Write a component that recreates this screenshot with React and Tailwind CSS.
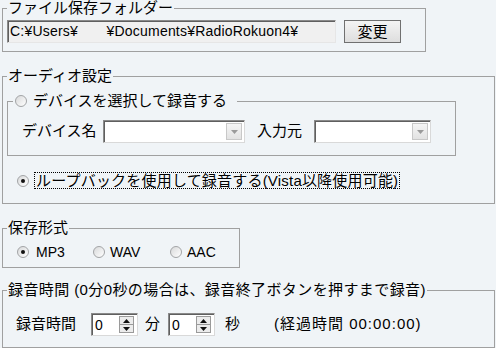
import React from 'react';

const font = { fontFamily: '"Liberation Sans", "Noto Sans CJK JP", sans-serif' };

function Radio({ checked }) {
  return (
    <span className="w-[12px] h-[12px] rounded-full border border-[#a2a4a6] bg-gradient-to-br from-[#d8d9da] to-white flex items-center justify-center shrink-0">
      {checked && <span className="w-[4px] h-[4px] rounded-full bg-[#111]" />}
    </span>
  );
}

function Combo({ w }) {
  return (
    <div className={`${w} h-[23px] bg-white border border-[#8a8a8a] border-b-[#d9d9d9] border-r-[#d9d9d9] shadow-[inset_1px_1px_0_#5f5f5f] flex justify-end p-[2px]`}>
      <div className="w-[16px] h-full bg-gradient-to-b from-[#f5f5f5] to-[#e2e2e2] border border-[#c8c8c8] flex items-center justify-center">
        <svg width="7" height="4" viewBox="0 0 7 4">
          <path d="M0 0h7L3.5 4z" fill="#9a9a9a" />
        </svg>
      </div>
    </div>
  );
}

function Spin({ w }) {
  return (
    <div className={`${w} h-[23px] bg-white border border-[#8a8a8a] border-b-[#d9d9d9] border-r-[#d9d9d9] shadow-[inset_1px_1px_0_#5f5f5f] flex items-center pl-[3px] pr-[3px]`}>
      <span className="flex-1 text-[14px] leading-none">0</span>
      <div className="w-[15px] h-[17px] flex flex-col">
        <div className="flex-1 bg-[#ececec] border border-[#9a9a9a] flex items-center justify-center">
          <svg width="7" height="4" viewBox="0 0 7 4">
            <path d="M0 4h7L3.5 0z" fill="#111" />
          </svg>
        </div>
        <div className="flex-1 bg-[#ececec] border border-t-0 border-[#9a9a9a] flex items-center justify-center">
          <svg width="7" height="4" viewBox="0 0 7 4">
            <path d="M0 0h7L3.5 4z" fill="#111" />
          </svg>
        </div>
      </div>
    </div>
  );
}

export default function App() {
  return (
    <div className="w-[496px] h-[348px] bg-[#f0f4f7] text-black text-[15px] overflow-hidden pl-[2px]" style={font}>
      {/* ファイル保存フォルダー */}
      <fieldset className="w-[424px] border border-[#a0a0a0] pl-[4px] pb-[8px]">
        <legend className="px-[1px] h-[16px] leading-[16px]">ファイル保存フォルダー</legend>
        <div className="mt-[4px] flex gap-[8px]">
          <div className="w-[329px] h-[23px] bg-[#f0f0f0] border border-[#8a8a8a] border-b-[#e6e6e6] border-r-[#e6e6e6] shadow-[inset_1px_1px_0_#5f5f5f] flex items-center pl-[2px] text-[14px] tracking-[0.2px] whitespace-pre">
            {'C:¥Users¥       ¥Documents¥RadioRokuon4¥'}
          </div>
          <button className="w-[57px] h-[23px] border border-[#707070] bg-gradient-to-b from-[#f4f4f4] to-[#dedede] leading-none">
            変更
          </button>
        </div>
      </fieldset>

      {/* オーディオ設定 */}
      <fieldset className="mt-[16px] w-[493px] border border-[#a0a0a0] pl-[4px] pb-[14px]">
        <legend className="px-[1px] h-[16px] leading-[16px]">オーディオ設定</legend>
        <fieldset className="mt-[9px] w-[449px] border border-[#a0a0a0] pl-[5px] pb-[12px]">
          <legend className="h-[16px] leading-[16px] pl-[2px] pr-[10px]">
            <span className="flex items-center gap-[6px]">
              <Radio />
              デバイスを選択して録音する
            </span>
          </legend>
          <div className="mt-[11px] ml-[9px] flex items-center">
            <span className="w-[81px]">デバイス名</span>
            <Combo w="w-[142px]" />
            <span className="ml-[12px] w-[57px]">入力元</span>
            <Combo w="w-[117px]" />
          </div>
        </fieldset>
        <div className="mt-[16px] ml-[10px] h-[17px] flex items-center gap-[5px]">
          <Radio checked />
          <span className="h-[17px] leading-[15px] border border-dotted border-black px-[1px] tracking-[0.2px]">
            ループバックを使用して録音する(Vista以降使用可能)
          </span>
        </div>
      </fieldset>

      {/* 保存形式 */}
      <fieldset className="mt-[16px] w-[238px] border border-[#a0a0a0] pl-[4px] pb-[7px]">
        <legend className="px-[1px] h-[16px] leading-[16px]">保存形式</legend>
        <div className="mt-[8px] ml-[10px] h-[16px] flex items-center text-[14px]">
          <span className="w-[76px] flex items-center gap-[7px]"><Radio checked />MP3</span>
          <span className="w-[77px] flex items-center gap-[5px]"><Radio />WAV</span>
          <span className="flex items-center gap-[5px]"><Radio />AAC</span>
        </div>
      </fieldset>

      {/* 録音時間 */}
      <fieldset className="mt-[14px] w-[493px] border border-[#a0a0a0] pl-[4px] pb-[11px]">
        <legend className="px-[1px] h-[16px] leading-[16px] tracking-[0.4px]">
          録音時間 (0分0秒の場合は、録音終了ボタンを押すまで録音)
        </legend>
        <div className="mt-[15px] ml-[9px] flex items-center">
          <span className="w-[75px]">録音時間</span>
          <Spin w="w-[47px]" />
          <span className="ml-[7px] w-[23px]">分</span>
          <Spin w="w-[47px]" />
          <span className="ml-[10px]">秒</span>
          <span className="ml-[34px] tracking-[1px]">(経過時間 00:00:00)</span>
        </div>
      </fieldset>
    </div>
  );
}
